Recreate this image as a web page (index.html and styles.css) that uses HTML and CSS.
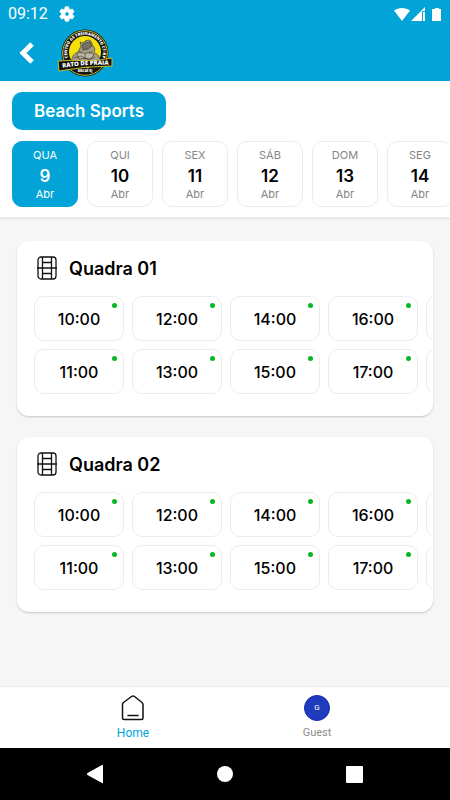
FILE: index.html
```
<!DOCTYPE html>
<html lang="pt-BR">
<head>
    <meta charset="UTF-8">
    <meta name="viewport" content="width=device-width, initial-scale=1.0">
    <title>Rato de Praia</title>
    <link rel="stylesheet" href="styles.css">
</head>
<body>
    <header>
        <div class="status-bar">
            <span>09:12</span>
            <svg width="16" height="16" viewBox="1 1 22 22" fill="#fff"><path d="M19.400 13a7.600 7.600 0 0 0 0-2l2.100-1.600a.5.5 0 0 0 .1-.7l-2-3.400a.5.5 0 0 0-.6-.2l-2.500 1a7.300 7.300 0 0 0-1.700-1l-.4-2.600a.5.5 0 0 0-.5-.5h-4a.5.5 0 0 0-.5.5L9 5.100a7.300 7.300 0 0 0-1.700 1l-2.500-1a.5.5 0 0 0-.6.2l-2 3.400a.5.5 0 0 0 .1.700L4.500 11a7.600 7.600 0 0 0 0 2l-2.200 1.600a.5.5 0 0 0-.1.700l2 3.400c.1.200.4.300.6.200l2.500-1a7.300 7.300 0 0 0 1.700 1l.4 2.600c0 .3.200.5.500.5h4c.3 0 .5-.2.500-.5l.4-2.600a7.300 7.300 0 0 0 1.700-1l2.500 1c.2.100.5 0 .6-.2l2-3.400a.5.5 0 0 0-.1-.7zM12 15a3 3 0 1 1 0-6 3 3 0 0 1 0 6z" stroke="#fff"/></svg>
            <svg class="signals" width="50" height="16" viewBox="0 0 50 16" fill="#fff">
                <path d="M2 4.500C6 1 14 1 18 4.500L10 15z"/>
                <path d="M19 15L33 1v4h-3v10zM31 6h2v9h-2z"/>
                <path d="M43 2h4v1h2v12h-9V3h3z"/>
            </svg>
        </div>
        <div class="app-bar">
            <button type="button" class="back" aria-label="Voltar">
                <svg width="18" height="24" viewBox="0 0 18 24" fill="none" stroke="#fff" stroke-width="5"><path d="M14 3L5 12l9 9"/></svg>
            </button>
            <svg class="logo" width="56" height="48" viewBox="0 0 56 48">
                <circle cx="28" cy="24" r="23.500" fill="#151510"/>
                <circle cx="28" cy="24" r="22.300" fill="none" stroke="#c9bb25" stroke-width="1"/>
                <circle cx="28" cy="23" r="16" fill="#f6e00a"/>
                <path id="ring" d="M11.500 31A18 18 0 1 1 44.500 31" fill="none"/>
                <text class="logo-ring"><textPath href="#ring" startOffset="50%" text-anchor="middle">CENTRO DE TREINAMENTO CT-RP</textPath></text>
                <g stroke="#34332b" stroke-width=".6">
                    <path d="M15 34c-1-5 1-9 6-11l3-6-1-4 3 1 2-2 4-1 2 1 1 3 3 5-1 4c5 1 7 6 5 11z" fill="#a29c88"/>
                    <path d="M25 16l3-2 5-1 2 4-4 3-5 1z" fill="#77725f"/>
                    <path d="M20 25c4-3 6-2 8 0 3-2 6-2 9 1l-4 4-5-1-6 1z" fill="#c0b9a2"/>
                    <path d="M17 29l7-2 8 4 6-3M28 25v5M22 22l3 3M35 22l-3 3" fill="none"/>
                </g>
                <path d="M1 32Q14 31 28 31.500T55 29v8Q28 37 2 42z" fill="#11110e" stroke="#c9bb25" stroke-width="1"/>
                <path id="ribbon" d="M4 39Q28 35 53 36" fill="none"/>
                <text class="logo-name"><textPath href="#ribbon" startOffset="50%" text-anchor="middle">RATO DE PRAIA</textPath></text>
                <text class="logo-city" x="28" y="43" text-anchor="middle">MACAÉ RJ</text>
            </svg>
        </div>
    </header>

    <section class="filters">
        <button type="button" class="sport">Beach Sports</button>
        <div class="days">
            <button type="button" class="day active"><span>QUA</span><strong>9</strong><span>Abr</span></button>
            <button type="button" class="day"><span>QUI</span><strong>10</strong><span>Abr</span></button>
            <button type="button" class="day"><span>SEX</span><strong>11</strong><span>Abr</span></button>
            <button type="button" class="day"><span>SÁB</span><strong>12</strong><span>Abr</span></button>
            <button type="button" class="day"><span>DOM</span><strong>13</strong><span>Abr</span></button>
            <button type="button" class="day"><span>SEG</span><strong>14</strong><span>Abr</span></button>
        </div>
    </section>

    <main>
        <section class="court">
            <h2>
                <svg width="20" height="24" viewBox="0 0 20 24" fill="none" stroke="#111" stroke-width="1.300"><rect x="1" y="1" width="18" height="22" rx="3"/><path d="M5.500 1v22M14.500 1v22M5.500 6.500h9M5.500 17.500h9M0 12h20"/></svg>
                Quadra 01
            </h2>
            <div class="slots">
                <button type="button" class="slot">10:00</button>
                <button type="button" class="slot">11:00</button>
                <button type="button" class="slot">12:00</button>
                <button type="button" class="slot">13:00</button>
                <button type="button" class="slot">14:00</button>
                <button type="button" class="slot">15:00</button>
                <button type="button" class="slot">16:00</button>
                <button type="button" class="slot">17:00</button>
                <button type="button" class="slot" aria-label="18:00"></button>
                <button type="button" class="slot" aria-label="19:00"></button>
            </div>
        </section>

        <section class="court">
            <h2>
                <svg width="20" height="24" viewBox="0 0 20 24" fill="none" stroke="#111" stroke-width="1.300"><rect x="1" y="1" width="18" height="22" rx="3"/><path d="M5.500 1v22M14.500 1v22M5.500 6.500h9M5.500 17.500h9M0 12h20"/></svg>
                Quadra 02
            </h2>
            <div class="slots">
                <button type="button" class="slot">10:00</button>
                <button type="button" class="slot">11:00</button>
                <button type="button" class="slot">12:00</button>
                <button type="button" class="slot">13:00</button>
                <button type="button" class="slot">14:00</button>
                <button type="button" class="slot">15:00</button>
                <button type="button" class="slot">16:00</button>
                <button type="button" class="slot">17:00</button>
                <button type="button" class="slot" aria-label="18:00"></button>
                <button type="button" class="slot" aria-label="19:00"></button>
            </div>
        </section>
    </main>

    <nav class="tabs">
        <a href="#home" class="active">
            <svg width="26" height="26" viewBox="0 0 26 26" fill="none" stroke="#111" stroke-width="1.500" stroke-linecap="round" stroke-linejoin="round"><path d="M2.500 9.500Q2.500 8.500 3.500 7.500L11.500 1.500q1.500-1 3 0L22 7.500q1 1 1 2V23q0 1.500-1.500 1.500H4Q2.500 24.500 2.500 23zM8 20.500h10"/></svg>
            Home
        </a>
        <a href="#guest">
            <span class="avatar">G</span>
            Guest
        </a>
    </nav>

    <div class="system-nav">
        <button type="button" aria-label="Back"><svg width="18" height="20" viewBox="0 0 18 20" fill="#fff"><path d="M1 10q0-.5.500-1L16 1q1-.5 1 .5v17q0 1-1 .5L1.500 11q-.5-.5-.5-1z"/></svg></button>
        <button type="button" aria-label="Home"><svg width="18" height="18" viewBox="0 0 18 18" fill="#fff"><circle cx="9" cy="9" r="8"/></svg></button>
        <button type="button" aria-label="Recent apps"><svg width="18" height="18" viewBox="0 0 18 18" fill="#fff"><rect x="0" y="1" width="17" height="17" rx="1"/></svg></button>
    </div>
</body>
</html>
```
FILE: styles.css
```
* {
    box-sizing: border-box;
}

body {
    font-family: Inter, Roboto, sans-serif;
    margin: 0;
    min-height: 100vh;
    display: flex;
    flex-direction: column;
    background-color: #f6f6f6;
    color: #000;
}

button {
    font-family: inherit;
    color: inherit;
    background: none;
    border: none;
    padding: 0;
    cursor: pointer;
}

svg {
    display: block;
    flex-shrink: 0;
}

/* Header */
header {
    background: #02a4d8;
    color: white;
}

.status-bar {
    display: flex;
    align-items: center;
    gap: 11px;
    height: 27px;
    padding: 0 8px;
    font-family: Roboto, sans-serif;
    font-size: 16px;
}

.signals {
    margin-left: auto;
}

.app-bar {
    display: flex;
    align-items: center;
    gap: 21px;
    height: 54px;
    padding: 0 18px 2px;
}

.logo text {
    font-family: "Open Sans", sans-serif;
    font-weight: 800;
    fill: #fff;
}

.logo .logo-ring {
    font-size: 4px;
}

.logo .logo-name {
    font-size: 6px;
}

.logo .logo-city {
    font-size: 3px;
}

/* Sport and day filters */
.filters {
    background: white;
    padding: 11px 0 10px 12px;
    border-bottom: 1px solid #ebebeb;
    box-shadow: 0 1px 2px rgba(0, 0, 0, 0.08);
}

.sport {
    display: block;
    height: 38px;
    padding: 0 22px;
    border-radius: 10px;
    background: #02a4d8;
    color: white;
    font-size: 17px;
    font-weight: 600;
}

.days {
    display: flex;
    gap: 9px;
    margin-top: 11px;
    overflow: hidden;
}

.day {
    display: flex;
    flex-direction: column;
    align-items: center;
    justify-content: center;
    flex: 0 0 66px;
    height: 66px;
    border: 1px solid #ececec;
    border-radius: 10px;
    font-size: 11px;
    line-height: 14px;
    color: #858585;
}

.day strong {
    margin-top: 3px;
    font-size: 17px;
    font-weight: 600;
    line-height: 22px;
    color: #000;
}

.day.active {
    background: #02a4d8;
    border-color: #02a4d8;
    color: white;
}

.day.active strong {
    color: white;
}

/* Courts */
main {
    flex: 1;
    display: flex;
    flex-direction: column;
    gap: 21px;
    padding: 23px 17px;
}

.court {
    background: white;
    border-radius: 12px;
    padding: 15px 1px 22px 17px;
    box-shadow: 0 1px 2px rgba(0, 0, 0, 0.2);
}

.court h2 {
    display: flex;
    align-items: center;
    gap: 12px;
    height: 24px;
    margin: 0;
    padding-left: 3px;
    font-size: 18px;
    font-weight: 600;
}

.slots {
    display: grid;
    grid-template-rows: 45px 45px;
    grid-auto-columns: 90px;
    grid-auto-flow: column;
    gap: 8px;
    margin-top: 16px;
    overflow: hidden;
}

.slot {
    position: relative;
    border: 1px solid #ececec;
    border-radius: 10px;
    font-size: 16px;
    font-weight: 500;
}

/* Availability dot */
.slot::after {
    content: "";
    position: absolute;
    top: 6px;
    right: 6px;
    width: 5px;
    height: 5px;
    border-radius: 50%;
    background: #05b824;
}

/* Bottom tabs */
.tabs {
    display: flex;
    height: 62px;
    padding: 0 41px;
    background: white;
    border-top: 1px solid #ececec;
}

.tabs a {
    flex: 1;
    display: flex;
    flex-direction: column;
    align-items: center;
    gap: 4px;
    padding-top: 8px;
    font-family: Roboto, sans-serif;
    font-size: 11px;
    line-height: 16px;
    color: #8c8c8c;
    text-decoration: none;
}

.tabs a.active {
    font-size: 12px;
    color: #02a4d8;
}

.avatar {
    width: 26px;
    height: 26px;
    border: 1px solid #1226b4;
    border-radius: 50%;
    background: #1f3cbc;
    color: white;
    font-size: 8px;
    line-height: 24px;
    text-align: center;
}

/* System navigation */
.system-nav {
    display: flex;
    align-items: center;
    justify-content: space-between;
    height: 52px;
    padding: 0 86px;
    background: #000;
}
```
